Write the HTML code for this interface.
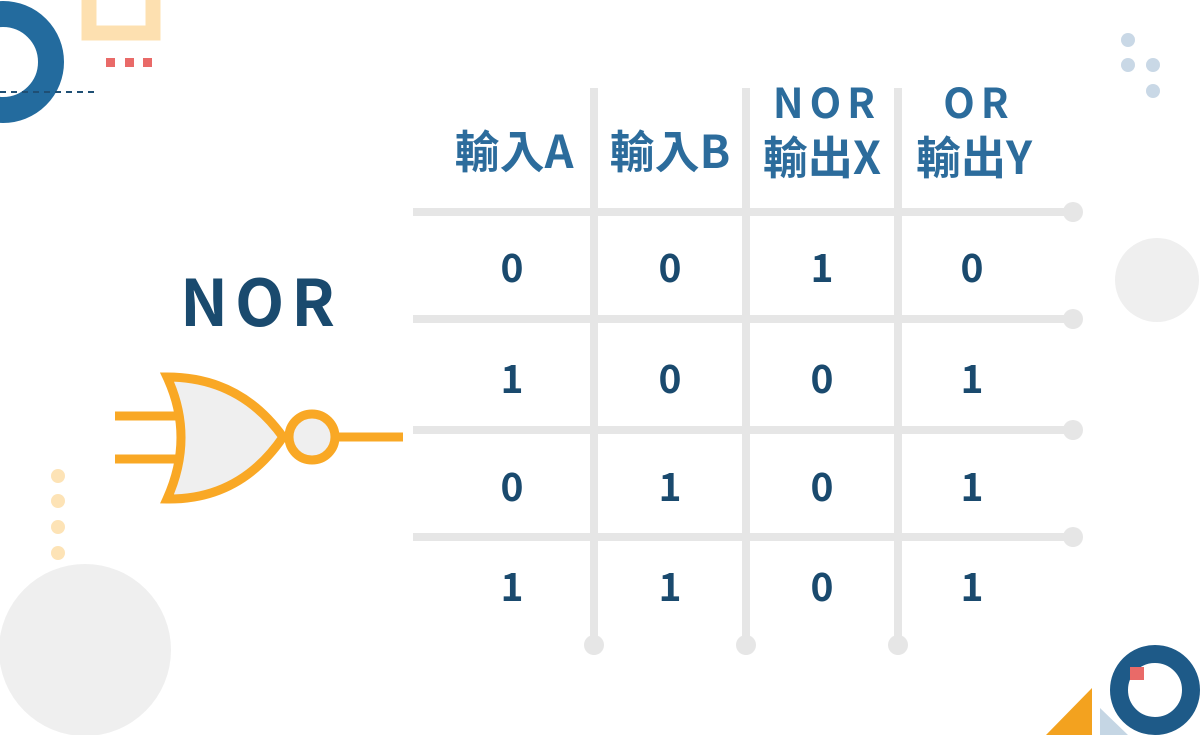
<!DOCTYPE html>
<html><head><meta charset="utf-8"><style>
html,body{margin:0;padding:0;background:#fff;width:1200px;height:735px;overflow:hidden}
svg text{font-family:"Noto Sans CJK TC","Liberation Sans",sans-serif;font-weight:700}
</style></head><body>
<svg width="1200" height="735" viewBox="0 0 1200 735" xmlns="http://www.w3.org/2000/svg">
<circle cx="3" cy="62" r="48" fill="none" stroke="#236b9e" stroke-width="26"/>
<line x1="0" y1="92" x2="96" y2="92" stroke="#1f4f74" stroke-width="2" stroke-dasharray="6,5"/>
<rect x="89" y="-10" width="64" height="43" fill="none" stroke="#fde0b0" stroke-width="15"/>
<rect x="106" y="58" width="9" height="9" fill="#e96a68"/>
<rect x="125" y="58" width="9" height="9" fill="#e96a68"/>
<rect x="143" y="58" width="9" height="9" fill="#e96a68"/>
<g fill="#c9d8e6"><circle cx="1128" cy="40" r="7"/><circle cx="1128" cy="65" r="7"/><circle cx="1153" cy="65" r="7"/><circle cx="1153" cy="91" r="7"/></g>
<circle cx="1157" cy="280" r="42" fill="#efefef"/>
<g fill="#fde3b6"><circle cx="58" cy="476" r="7"/><circle cx="58" cy="501" r="7"/><circle cx="58" cy="527" r="7"/><circle cx="58" cy="553" r="7"/></g>
<circle cx="85" cy="650" r="86" fill="#efefef"/>
<polygon points="1046,735 1092,688 1092,735" fill="#f3a21f"/>
<polygon points="1100,708 1100,735 1128,735" fill="#c5d6e4"/>
<circle cx="1155" cy="690" r="36" fill="none" stroke="#1e5a88" stroke-width="18"/>
<rect x="1130" y="667" width="14" height="13" fill="#e96a68"/>
<g stroke="#e6e6e6" stroke-width="8">
<line x1="594" y1="88" x2="594" y2="645"/><line x1="746" y1="88" x2="746" y2="645"/><line x1="898" y1="88" x2="898" y2="645"/>
<line x1="413" y1="212" x2="1073" y2="212"/><line x1="413" y1="319" x2="1073" y2="319"/><line x1="413" y1="430" x2="1073" y2="430"/><line x1="413" y1="537" x2="1073" y2="537"/>
</g>
<g fill="#e6e6e6">
<circle cx="594" cy="645" r="10"/><circle cx="746" cy="645" r="10"/><circle cx="898" cy="645" r="10"/>
<circle cx="1073" cy="212" r="10"/><circle cx="1073" cy="319" r="10"/><circle cx="1073" cy="430" r="10"/><circle cx="1073" cy="537" r="10"/>
</g>
<g fill="#2c6c9c" font-size="45" text-anchor="middle">
<text x="514" y="168">輸入A</text>
<text x="670" y="168">輸入B</text>
<text x="822" y="174">輸出X</text>
<text x="974" y="174">輸出Y</text>
</g>
<g fill="#2c6c9c" font-size="41" text-anchor="middle" letter-spacing="6">
<text x="827" y="118">NOR</text>
<text x="979" y="118">OR</text>
</g>
<g fill="#1a4a6e" font-size="39" text-anchor="middle">
<text x="512" y="282">0</text><text x="670" y="282">0</text><text x="822" y="282">1</text><text x="972" y="282">0</text>
<text x="512" y="393">1</text><text x="670" y="393">0</text><text x="822" y="393">0</text><text x="972" y="393">1</text>
<text x="512" y="501">0</text><text x="670" y="501">1</text><text x="822" y="501">0</text><text x="972" y="501">1</text>
<text x="512" y="601">1</text><text x="670" y="601">1</text><text x="822" y="601">0</text><text x="972" y="601">1</text>
</g>
<text x="261" y="326" fill="#1a4a6e" font-size="64" text-anchor="middle" letter-spacing="7">NOR</text>
<g stroke="#f9a825" stroke-width="9" fill="#efefef">
<line x1="115" y1="416" x2="182" y2="416"/><line x1="115" y1="459" x2="182" y2="459"/>
<line x1="336" y1="437" x2="403" y2="437"/>
<path d="M167,377 Q195,437 167,499 Q240,500 283,437 Q240,377 167,377 Z"/>
<circle cx="312" cy="437" r="23"/>
</g>
</svg>
</body></html>
